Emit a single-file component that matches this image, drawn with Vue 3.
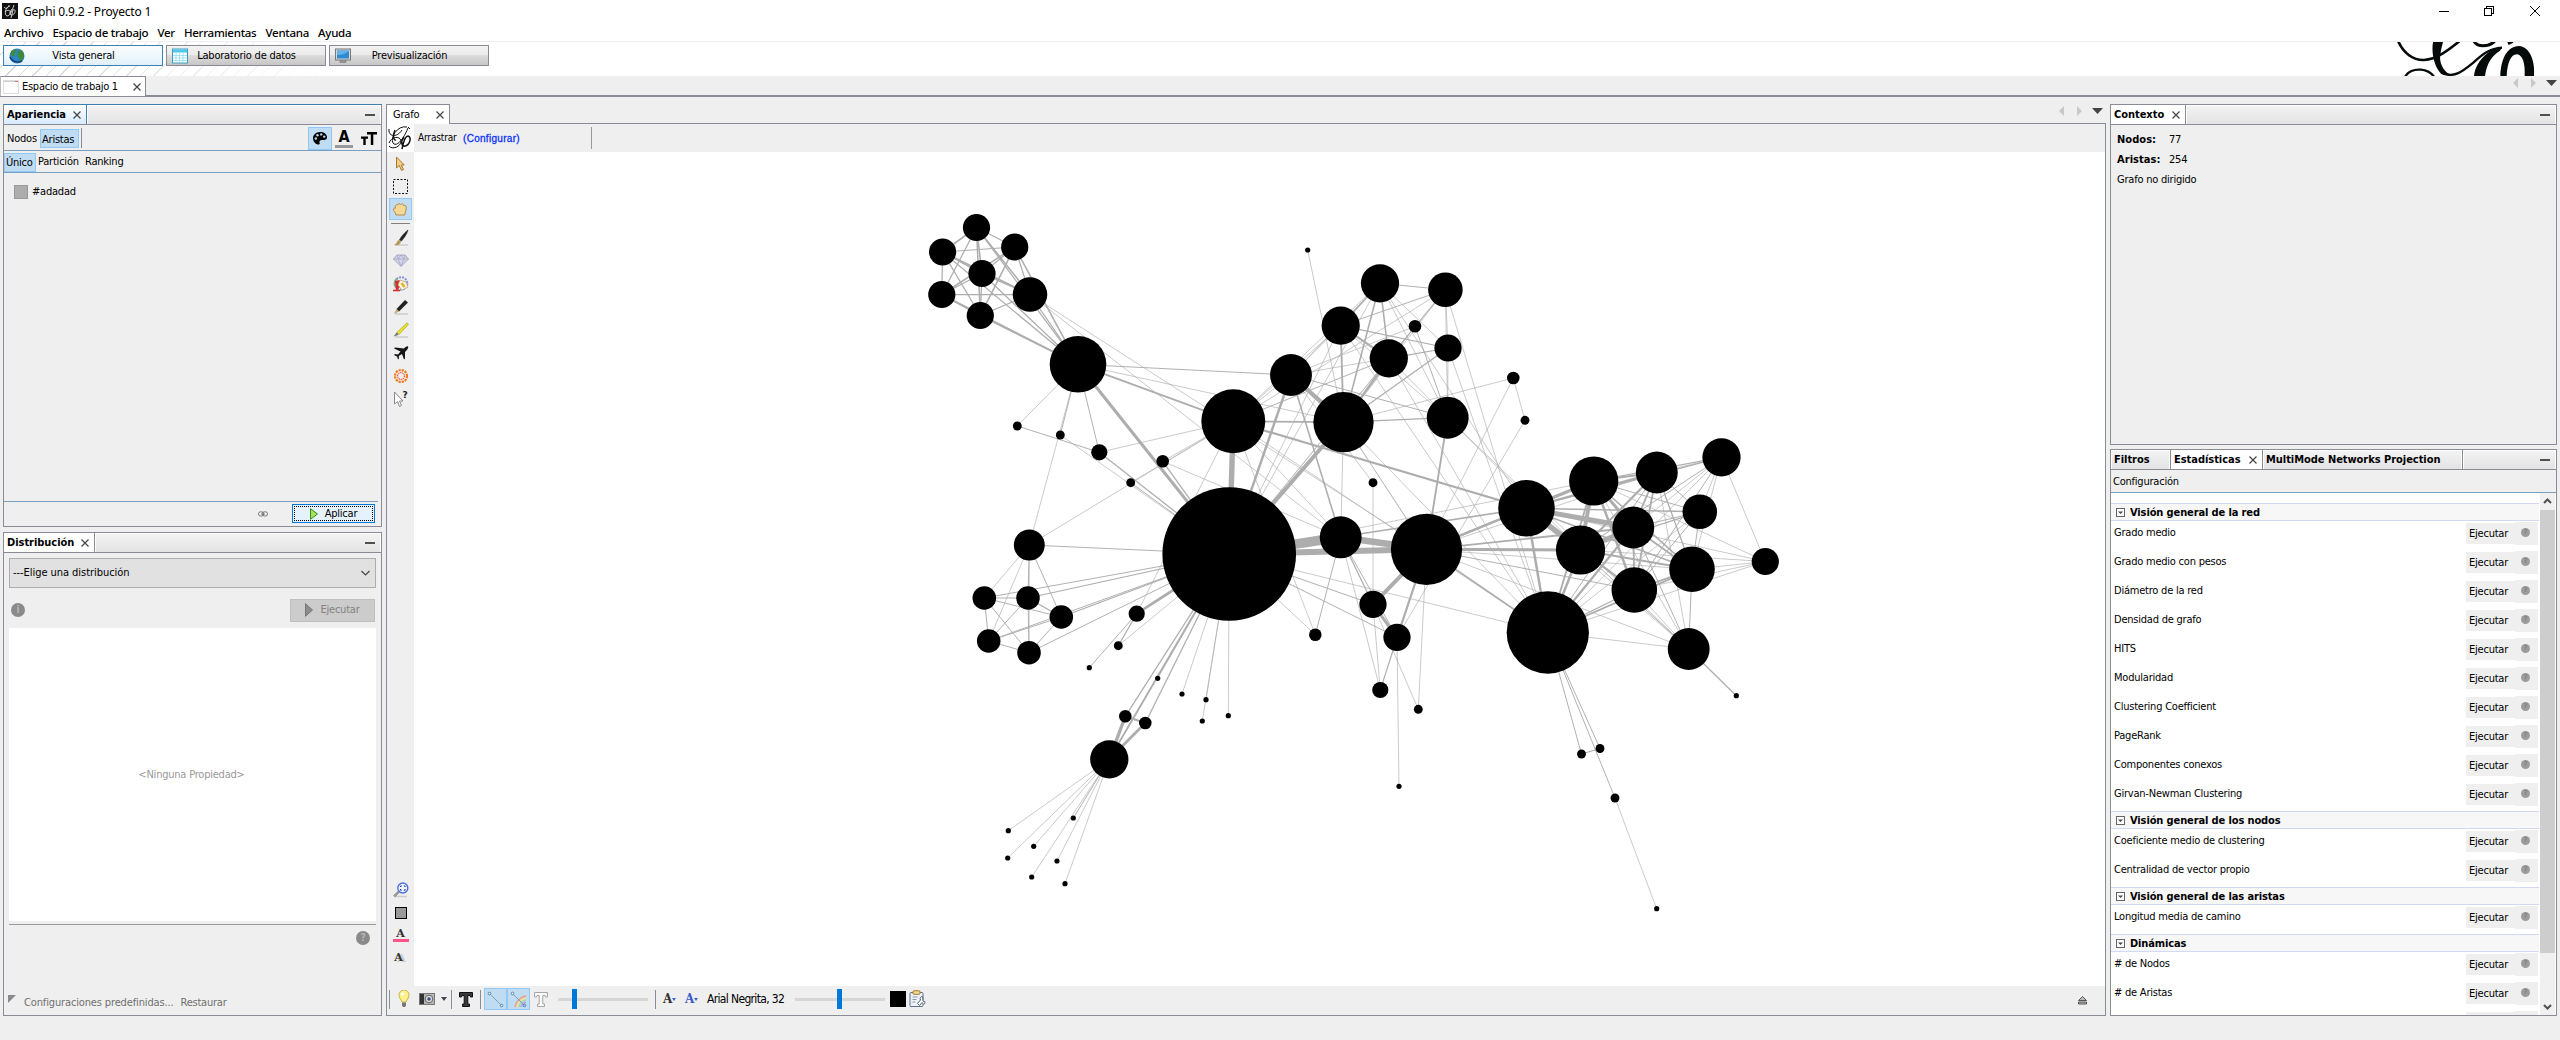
<script setup>
const menus = ['Archivo', 'Espacio de trabajo', 'Ver', 'Herramientas', 'Ventana', 'Ayuda']

const sections = [
  {
    title: 'Visión general de la red',
    rows: ['Grado medio', 'Grado medio con pesos', 'Diámetro de la red', 'Densidad de grafo', 'HITS', 'Modularidad',
      'Clustering Coefficient', 'PageRank', 'Componentes conexos', 'Girvan-Newman Clustering'],
  },
  { title: 'Visión general de los nodos', rows: ['Coeficiente medio de clustering', 'Centralidad de vector propio'] },
  { title: 'Visión general de las aristas', rows: ['Longitud media de camino'] },
  { title: 'Dinámicas', rows: ['# de Nodos', '# de Aristas', ''] },
]

// Node centres, indexed by node id
const points = [
  [1109.3, 759.3], [1008.3, 830.7], [1145.3, 723], [1125.3, 716.3], [1033.7, 846.3], [1007.7, 858], [1031.7, 877],
  [1057, 861], [1073.3, 818], [1065, 883.7], [1157.7, 678.3], [1229.2, 554], [1060.3, 435], [1182, 694],
  [1206, 699.7], [1202.3, 721], [1030, 294.5], [982, 273.5], [942.6, 252], [976.5, 227.5], [980.3, 315.5],
  [941.8, 294.5], [1014.7, 247], [1078, 364.3], [1291, 375], [1343.5, 422.2], [1340.7, 537.3], [1233.3, 421.3],
  [1136.7, 613.7], [1029.3, 545], [1017.3, 426], [1099.3, 452.3], [1228.3, 715.7], [1130.7, 482.7], [1028, 598],
  [1061.3, 617], [984.3, 598], [988.7, 641], [1029, 652.7], [1513.3, 378], [1307.7, 250], [1447.7, 417.7],
  [1415, 326.3], [1162.7, 461.3], [1118.3, 645.7], [1089.3, 667.7], [1656.7, 908.7], [1615, 798], [1547.8, 632.5],
  [1373, 604.3], [1373, 482.7], [1397, 637.3], [1525, 420.3], [1399, 786.3], [1380.3, 690], [1426.5, 549.3],
  [1418.3, 709.3], [1688.7, 649], [1526.5, 508.3], [1633.3, 527.5], [1699.8, 511.8], [1656.8, 472.5],
  [1580.5, 550], [1692, 569.3], [1593.7, 481], [1634.3, 590], [1721.5, 457.3], [1736.3, 695.7], [1340.7, 325.7],
  [1388.8, 358.3], [1380, 283.3], [1445.4, 289.7], [1315.3, 634.7], [1581.5, 754], [1600, 748.5], [1448, 348],
  [1765.3, 561.5],
]

// source: target/weight …
const adjacency = `
1:0/1;2:0/8;3:0/10 2/6;4:0/1;5:0/1;6:0/1;7:0/1;8:0/2;9:0/1;11:10/1 3/3 2/3 0/5;12:11/1;13:11/1;14:11/1;15:11/1;
17:16/4;18:16/4 17/4;19:16/4 17/4 18/4;20:16/3 17/3 18/3 19/4;21:16/3 17/3 18/3 19/3 20/5;
22:16/3 17/3 18/3 19/3 20/4 21/4;23:16/3 17/3 18/3 19/3 20/4 21/4 22/4 12/2 11/9;24:23/2 11/7;25:24/13 23/1 11/12;
26:24/4 11/31 16/1 25/1;27:11/17 23/5 25/5 24/1 26/1;28:11/8 27/1;29:23/1 27/1 11/2;30:23/1;31:30/2 11/3 23/2 27/1;
32:11/1;33:11/2 27/1;34:11/3 29/2;35:11/3 29/2 34/3;36:34/2 35/2 11/2 29/1;37:34/2 35/2 36/2 11/2 29/1;
38:34/2 35/2 36/2 37/2 11/2 29/1;39:25/1;40:25/1;41:24/2 25/3;42:41/2 25/2 24/1;43:11/3 26/1 27/1;44:28/3 11/1;
45:28/2;47:46/1;48:47/2 25/1 27/1 11/1;49:26/3 11/2;50:49/1 24/1;51:49/9 26/2 11/2;52:51/1 39/1;53:51/1;
54:51/2 49/1 26/1;55:51/6 49/12 39/1 54/1 26/21 11/19 16/1 25/2 41/5 48/4;56:49/1 55/1;57:55/1 41/1 48/1;
58:55/7 48/7 27/6 57/1 11/4;59:58/15 55/5 48/6 57/2;60:48/1 58/4 59/2;61:48/2 58/6 60/2 59/5 57/1 55/1;
62:55/9 58/17 59/13 48/7 57/2 41/1 61/6 60/3;63:59/5 48/5 62/6 57/2 58/4 61/3 60/2 55/1;
64:55/5 62/12 48/5 63/4 58/10 61/6 60/2 59/9 57/1 11/1;65:63/5 64/7 48/3 62/5 58/5 61/5 60/2 59/5 57/1 55/2;
66:64/3 58/3 59/1 62/2 65/2 48/1 63/1 61/1 60/1;67:57/3;68:25/5 11/1 24/1 27/1 48/1 41/1;
69:25/6 68/6 11/1 24/1 27/2 48/1 41/1;70:25/4 69/4 68/4 11/1 24/1 27/1 41/1 58/1;
71:27/1 69/2 68/2 70/2 11/1 48/1 41/1 25/1;72:26/2 27/1 11/1;73:48/2;74:48/2 73/3;75:69/3 68/3 25/3 48/1 41/1 70/1 71/1;
76:64/1 65/1 66/1 63/1 62/1 48/1 58/1`

const edges = adjacency.replace(/\n/g, '').split(';').flatMap((entry) => {
  const [source, list] = entry.split(':')
  return list.split(' ').map((item) => {
    const [target, weight] = item.split('/').map(Number)
    return { a: points[+source], b: points[target], s: +source, t: target, w: weight }
  })
})

const degree = points.map((_, i) => edges.filter((e) => e.s === i || e.t === i).length)
const nodes = points.map(([x, y], i) => ({ x, y, r: 2.6 + 1.835 * (degree[i] - 1) }))
const edgeWidth = (w) => (w === 1 ? 0.65 : 0.3 * w + 0.35)
</script>

<template>
  <div class="app">
    <header class="titlebar">
      <svg class="appicon" width="16" height="16" viewBox="0 0 16 16">
        <rect width="16" height="16" fill="#111" />
        <path d="M2 4c2 3 5 0 5-2M8 3c-5 1-6 9-3 10c3 0 5-5 7-11M3 9c3-3 6-2 5 2M10 6c-2 2-3 7 0 6c4-1 4-7 1-5l-2 8" fill="none" stroke="#ddd" stroke-width=".9" />
      </svg>
      <span class="title">Gephi 0.9.2 - Proyecto 1</span>
      <svg class="winctl" width="110" height="20" viewBox="0 0 110 20" fill="none" stroke="#000" shape-rendering="crispEdges">
        <path d="M9 10.500h10M54.500 7.500h7v7h-7zM56.500 7.500v-2h7v7h-2" />
        <path d="M100 5l10 10M110 5l-10 10" shape-rendering="auto" />
      </svg>
    </header>
    <nav class="menubar"><span v-for="m in menus" :key="m">{{ m }}</span></nav>

    <div class="banner">
      <button class="mode on">
        <svg width="16" height="16" viewBox="0 0 16 16"><circle cx="8" cy="8" r="7.500" fill="#2f84c4" /><path d="M2 3.500C4 1 7 1 8 2l-1 2-2 1 1 2-2 2-2-2zM9 3l4-.5 2 3v3l-2 4-2 1-1-4-2-2 1-3z" fill="#3d8a3a" /><path d="M1 9c2 5 8 6 12 4" stroke="#123f7c" stroke-width="1.500" fill="none" /></svg>
        <span>Vista general</span>
      </button>
      <button class="mode">
        <svg width="16" height="16" viewBox="0 0 16 16"><rect x=".5" y="1" width="15" height="14" fill="#fff" stroke="#3d9cc0" /><rect x="1" y="1.500" width="14" height="3" fill="#4cc8ea" /><path d="M4 5v10M7.500 5v10M11 5v10M1 7.500h14M1 10h14M1 12.500h14" stroke="#8edaf0" stroke-width=".8" /></svg>
        <span>Laboratorio de datos</span>
      </button>
      <button class="mode">
        <svg width="16" height="16" viewBox="0 0 16 16"><rect x=".5" y="1" width="15" height="11" fill="#d8d8d8" stroke="#777" /><rect x="2" y="2.500" width="12" height="8" fill="#2e8ad0" /><path d="M2 7c4 0 8-1 12-4v-.5H2z" fill="#64b2e8" /><path d="M5 12.500h6v2H5z" fill="#999" stroke="#777" stroke-width=".6" /></svg>
        <span>Previsualización</span>
      </button>
      <svg class="logo" width="142" height="34" viewBox="1065 126 426 102" fill="none" stroke="#050a0b">
        <path d="M1074 122C1090 160 1120 181 1152 180C1190 178 1226 150 1258 124" stroke-width="8" />
        <path d="M1180 122C1173 150 1180 198 1204 222L1240 228C1215 222 1196 190 1201 166C1202 150 1206 140 1210 122Z" fill="#050a0b" stroke="none" />
        <path d="M1095 232C1102 214 1124 207 1142 209C1162 211 1175 220 1182 230" stroke-width="7" />
        <path d="M1204 218C1240 236 1266 216 1300 188C1330 160 1350 146 1386 143" stroke-width="7" />
        <path d="M1302 228C1304 205 1318 178 1343 159C1356 149 1370 146 1386 142L1380 152C1356 166 1340 190 1335 228Z" fill="#050a0b" stroke="none" />
        <path d="M1381 228C1383 178 1400 139 1437 138C1470 140 1486 184 1482 228H1454C1456 190 1448 165 1431 163C1412 163 1402 190 1400 228Z" fill="#050a0b" stroke="none" />
        <path d="M1302 124C1312 142 1344 142 1364 124M1404 131L1418 124" stroke-width="9" />
      </svg>
    </div>

    <div class="workspaces">
      <div class="wstab">
        <svg width="16" height="14" viewBox="0 0 16 14"><rect x=".5" y=".5" width="15" height="13" fill="#fdfdfd" stroke="#ddd" /><path d="M1 1.500h14" stroke="#ccc" /><path d="M12 1.500h3" stroke="#d66" /></svg>
        <span>Espacio de trabajo 1</span>
        <svg class="x" width="8" height="8" viewBox="0 0 8 8"><path d="M.5.5l7 7M7.500.5l-7 7" /></svg>
      </div>
      <svg class="arrows" width="44" height="10" viewBox="0 0 44 10"><path d="M5 0v10L0 5zM18 0v10l5-5z" fill="#c8c8c8" /><path d="M33 2h11l-5.500 6z" fill="#444" /></svg>
    </div>

    <main class="main">
      <aside class="left">
        <section class="panel appearance">
          <div class="tabs"><div class="tab active-blue" style="width: 83px"><b>Apariencia</b><svg class="x" width="8" height="8" viewBox="0 0 8 8"><path d="M.5.5l7 7M7.500.5l-7 7" /></svg></div><div class="fill"><i class="min"></i></div></div>
          <div class="row1">
            <span class="nodos">Nodos</span><span class="sel aristas">Aristas</span><i class="vsep"></i>
            <div class="tools">
              <span class="sel pal"><svg width="14" height="13" viewBox="0 0 14 13"><path d="M7 0C3 0 0 3 0 6c0 3 2 6 5 6.500 2 .4 2-1 1.500-2S7 8 8.500 8H11c2 0 3-1 3-2.500C14 2 11 0 7 0z" fill="#000" /><g fill="#c0dcf3"><circle cx="2.800" cy="6.500" r="1.200" /><circle cx="4.500" cy="3.200" r="1.200" /><circle cx="8.200" cy="2.400" r="1.200" /><circle cx="11.200" cy="4.600" r="1.200" /></g></svg></span>
              <span class="bigA">A</span>
              <svg width="16" height="13" viewBox="0 0 16 13"><path d="M6 0h10v2.500h-3.700V13H9.800V2.500H6zM0 4.500h7v2.200H4.700V13H2.300V6.700H0z" fill="#000" /></svg>
            </div>
          </div>
          <div class="row2"><span class="sel unico">Único</span><span class="partic">Partición</span><span class="rank">Ranking</span></div>
          <div class="color"><i></i><span>#adadad</span></div>
          <div class="apply">
            <svg width="10" height="6" viewBox="0 0 10 6" fill="none" stroke="#777"><rect x=".5" y=".8" width="5" height="4.200" rx="2" /><rect x="4.500" y=".8" width="5" height="4.200" rx="2" /><path d="M3 3h4" /></svg>
            <button class="applybtn"><span><svg width="8" height="12" viewBox="0 0 8 12"><path d="M.5.7v10.600L7.500 6z" fill="#a9e05c" stroke="#2f8f1f" /></svg>Aplicar</span></button>
          </div>
        </section>

        <section class="panel layout">
          <div class="tabs"><div class="tab" style="width: 91px"><b>Distribución</b><svg class="x" width="8" height="8" viewBox="0 0 8 8"><path d="M.5.5l7 7M7.500.5l-7 7" /></svg></div><div class="fill"><i class="min"></i></div></div>
          <div class="combo"><span>---Elige una distribución</span><svg width="9" height="6" viewBox="0 0 9 6"><path d="M.5 1l4 4 4-4" fill="none" stroke="#444" stroke-width="1.200" /></svg></div>
          <div class="runrow"><i class="dot">i</i><button class="runbtn"><svg width="8" height="14" viewBox="0 0 8 14"><path d="M.5.7v12.600L7.500 7z" fill="#8d8d8d" stroke="#777" /></svg>Ejecutar</button></div>
          <div class="props">&lt;Ninguna Propiedad&gt;</div>
          <div class="helprow"><i class="dot">?</i></div>
          <div class="presets"><svg width="8" height="8" viewBox="0 0 8 8"><path d="M0 0h8L0 8z" fill="#8a8a8a" /></svg><span class="cp">Configuraciones predefinidas...</span><span>Restaurar</span></div>
        </section>
      </aside>

      <section class="center">
        <div class="gtabs">
          <div class="gtab"><span>Grafo</span><svg class="x" width="8" height="8" viewBox="0 0 8 8"><path d="M.5.5l7 7M7.500.5l-7 7" /></svg></div>
          <svg class="garrows" width="44" height="10" viewBox="0 0 44 10"><path d="M5 0v10L0 5zM18 0v10l5-5z" fill="#c8c8c8" /><path d="M33 2h11l-5.500 6z" fill="#444" /></svg>
        </div>
        <div class="gbody">
          <div class="gtop">
            <svg class="glogo" width="27" height="28" viewBox="0 0 27 28" fill="none" stroke="#111">
              <path d="M2 5c-1 8 8 9 13 1M20 3C10 1 3 14 6 19c4 5 11-5 15-15M21 3l2 2M2 19c2-6 11-8 12-2c0 6-9 9-12 5" stroke-width="1" />
              <path d="M17 13c-4 5-2 10 1 9c5-1 7-9 3-10c-3 0-5 8-6 13" stroke-width="1.500" /><path d="M8 6C5 12 7 17 9 16" stroke-width="1.400" />
            </svg>
            <span class="drag">Arrastrar</span><span class="conf">(Configurar)</span><i class="gsep"></i>
          </div>
          <div class="gmid">
            <div class="gtools">
              <div class="tg">
                <span class="ti"><svg width="16" height="18" viewBox="0 0 16 18"><path d="M4.500 2v11l2.800-2.500 2.200 5 2-1-2.200-4.500h3z" fill="#f0cf86" stroke="#a9772f" /></svg></span>
                <span class="ti"><svg width="15" height="15" viewBox="0 0 15 15"><rect x=".5" y=".5" width="14" height="14" fill="none" stroke="#111" stroke-dasharray="2 1.500" /></svg></span>
                <span class="ti sel"><svg width="14" height="13" viewBox="0 0 14 13"><path d="M3 12c0-3-3-4-2.500-6 .5-1 1-1 2-.8C2 2 3 1.500 4.500 2 5 .5 7 .3 7.500 1.500 9 .3 10.500 1 10.500 2.500c2-.5 3 .5 2.800 2.500-.3 3-1.300 4-1.500 7z" fill="#f4d894" stroke="#a9772f" stroke-width=".8" /></svg></span>
              </div>
              <i class="hsep"></i>
              <span class="ti"><svg width="16" height="18" viewBox="0 0 16 18"><path d="M2 16h13" stroke="#ccc" stroke-width="1.500" /><path d="M15 1C11 4 8 8 6.500 11l2 1C11 9 14 5 15 1z" fill="#222" stroke="#222" stroke-width=".6" /><path d="M6 11c-2 0-2 4-5 5 4 1 7-1 7-4z" fill="#b59a55" /></svg></span>
              <span class="ti"><svg width="16" height="14" viewBox="0 0 16 14"><path d="M4 1h8l3.500 4L8 12.500.5 5z" fill="#d4d4ea" stroke="#9797b8" stroke-width=".8" /><path d="M.5 5h15M5 5l3 7 3-7M4 1l1 4 3-4 3 4 1-4" fill="none" stroke="#a3a3c0" stroke-width=".7" /></svg></span>
              <span class="ti"><svg width="16" height="16" viewBox="0 0 16 16"><circle cx="8" cy="7.500" r="6.300" fill="none" stroke="#8a8fe0" stroke-width="2" stroke-dasharray="2 1" /><path d="M2 10a6.500 6.500 0 0 1 3-8" stroke="#6ac070" stroke-width="2" stroke-dasharray="2 1" fill="none" /><path d="M2 5l5-1 1 6-5 5z" fill="#d4302a" /><path d="M7 4l6 2 2 5-6 3-4-5z" fill="#fbf6ea" stroke="#b99a60" stroke-width=".7" /><path d="M8.500 7l3 4" stroke="#e8b020" stroke-width="2.500" /><path d="M0 14.500h7" stroke="#d4302a" stroke-width="1.600" /></svg></span>
              <span class="ti"><svg width="16" height="16" viewBox="0 0 16 16"><path d="M2 15h13" stroke="#ccc" stroke-width="1.500" /><path d="M12 1l3 2.500L6 12.500 3.500 10z" fill="#222" /><path d="M3.500 10L1 15l5-2.500z" fill="#caa56c" /></svg></span>
              <span class="ti"><svg width="16" height="16" viewBox="0 0 16 16"><path d="M2 15h13" stroke="#ccc" stroke-width="1.500" /><path d="M14 .8l1.500 1.500L6 12.500 4 10.500z" fill="#ece52a" stroke="#a8a214" stroke-width=".7" /><path d="M4 10L.5 14.500l5-1.500z" fill="#777" /></svg></span>
              <span class="ti"><svg width="16" height="14" viewBox="0 0 16 14"><path d="M15 .5c-1-.6-2.500.5-4 2L2 1.500l-1 1L7.500 5.500 5 8.500 2 8 1 9l3 1.500L5 13.500l1-1-.2-2.500L9 8l2 5.500 1-1V6c2-2 4-4 3-5.500z" fill="#151515" /></svg></span>
              <span class="ti"><svg width="16" height="16" viewBox="0 0 16 16" fill="none"><circle cx="8" cy="8" r="6" stroke="#f47a20" stroke-width="2.200" stroke-dasharray="2.200 .94" /><circle cx="8" cy="8" r="3.400" stroke="#f05a3a" stroke-width="1.200" stroke-dasharray="1.400 .7" /></svg></span>
              <span class="ti"><svg width="16" height="18" viewBox="0 0 16 18"><path d="M1.500 2v12l3-2.500 2 5 2-1-2-4.500h3.500z" fill="#fff" stroke="#888" /><text x="9.500" y="8" font-size="9" font-weight="bold" font-family="DejaVu Sans" fill="#222">?</text></svg></span>
              <span class="grow"></span>
              <span class="ti b"><svg width="16" height="16" viewBox="0 0 16 16"><path d="M2 14.500h12" stroke="#ccc" stroke-width="1.500" /><path d="M1 14.500L6 9.500" stroke="#999" stroke-width="2.500" /><circle cx="9.800" cy="6" r="5" fill="#eef3ff" stroke="#4a6fd8" stroke-width="1.400" /><path d="M7.500 5V4h1.300M10.800 4h1.300v1M12.100 7v1.200h-1.300M8.800 8.200H7.500V7" fill="none" stroke="#2a3fa8" /></svg></span>
              <span class="ti b"><i class="gray"></i></span>
              <span class="ti b lab"><em>A</em></span>
              <span class="ti b lab2"><em>A</em></span>
            </div>
            <svg class="graph" width="1691" height="834" viewBox="414 152 1691 834">
              <g stroke="#adadad"><line v-for="(e, i) in edges" :key="i" :x1="e.a[0]" :y1="e.a[1]" :x2="e.b[0]" :y2="e.b[1]" :stroke-width="edgeWidth(e.w)" /></g>
              <circle v-for="(n, i) in nodes" :key="i" :cx="n.x" :cy="n.y" :r="n.r" />
            </svg>
          </div>
          <div class="gbar">
            <i class="s" style="margin-left: 2px"></i>
            <svg style="margin-left: 8px" width="12" height="18" viewBox="0 0 12 18"><path d="M4 12C3 9 1 8 1 5a5 5 0 0 1 10 0c0 3-2 4-3 7z" fill="#fbf28a" stroke="#c9b24a" /><path d="M4 12.500h4v3l-1 1.500H5l-1-1.500z" fill="#777" /><circle cx="4.500" cy="4" r="1.500" fill="#fff" /></svg>
            <svg style="margin-left: 9px" width="16" height="14" viewBox="0 0 16 14"><rect x=".5" y="1.500" width="15" height="11" fill="#b5b5b5" stroke="#777" /><rect x="1" y="2" width="4" height="10" fill="#333" /><circle cx="10" cy="7" r="3.800" fill="#ddd" stroke="#666" /><circle cx="10" cy="7" r="1.800" fill="#405080" /></svg>
            <svg style="margin-left: 6px" width="6" height="4" viewBox="0 0 6 4"><path d="M0 0h6L3 4z" fill="#445" /></svg>
            <i class="s" style="margin-left: 4px"></i>
            <svg style="margin-left: 7px" width="14" height="15" viewBox="0 0 14 15"><path d="M.5.5h13v4.500h-2L11 3.500H8.800v8.500h1.700v2.500h-7V12h1.700V3.500H3L2.500 5h-2z" fill="#38383c" stroke="#111" /></svg>
            <i class="s" style="margin-left: 7px"></i>
            <span class="sel tog" style="margin-left: 3px"><svg width="17" height="17" viewBox="0 0 17 17"><path d="M2.500 2.500l12 12" stroke="#7a9fc0" /><circle cx="2.500" cy="2.500" r="1.300" fill="#fff" stroke="#5580a8" /><circle cx="14.500" cy="14.500" r="1.300" fill="#fff" stroke="#5580a8" /></svg></span>
            <span class="sel tog"><svg width="17" height="17" viewBox="0 0 17 17" fill="none"><path d="M5 16C6 11 10 6 16 5" stroke="#e8a09a" stroke-width="1.800" /><path d="M7 16c1-5 4-8 9-9" stroke="#eedf9a" stroke-width="1.800" /><path d="M9 16c1-4 3-6 7-7" stroke="#a6d8b0" stroke-width="1.800" /><path d="M11 16c1-3 2-4 5-5" stroke="#b0a8e4" stroke-width="1.800" /><path d="M2.500 2.500l12 12" stroke="#7a9fc0" /><circle cx="2.500" cy="2.500" r="1.300" fill="#fff" stroke="#5580a8" /><circle cx="14.500" cy="14.500" r="1.300" stroke="#5580a8" /></svg></span>
            <svg style="margin-left: 4px" width="14" height="15" viewBox="0 0 14 15"><path d="M.5.5h13v4.500h-2L11 3.500H8.800v8.500h1.700v2.500h-7V12h1.700V3.500H3L2.500 5h-2z" fill="#fafafa" stroke="#a5a5a5" /></svg>
            <div class="slider" style="margin-left: 10px"><i style="margin-left: 14px"></i></div>
            <i class="s" style="margin-left: 7px"></i>
            <span class="serif" style="margin-left: 7px">A<small></small></span>
            <span class="serif blue" style="margin-left: 8px">A<small></small></span>
            <span class="fontname">Arial Negrita, 32</span>
            <div class="slider" style="margin-left: 10px"><i style="margin-left: 42px"></i></div>
            <i class="black"></i>
            <svg style="margin-left: 3px" width="17" height="18" viewBox="0 0 17 18"><rect x="1" y="2.500" width="13" height="14" rx="1" fill="#eef1f6" stroke="#5f6f88" /><rect x="4" y=".8" width="7" height="3.500" rx="1" fill="#f0d8a0" stroke="#a87820" /><path d="M3.500 7h5M3.500 9.500h4M3.500 12h3" stroke="#8a9ab0" /><path d="M13.500 6.500c-2 0-3 1.500-2 3.500l-3 3.500 2 2 2.500-3c2 3 3 1.500 3-1-1 1-3-1-2-2.500z" fill="#fff" stroke="#4f5f78" /></svg>
            <svg class="eject" width="9" height="9" viewBox="0 0 9 9"><path d="M4.500.5l4 4h-8zM.5 6h8v2h-8z" fill="#bbb" stroke="#333" stroke-width=".8" /></svg>
          </div>
        </div>
      </section>

      <aside class="right">
        <section class="panel context">
          <div class="tabs"><div class="tab" style="width: 75px"><b>Contexto</b><svg class="x" width="8" height="8" viewBox="0 0 8 8"><path d="M.5.5l7 7M7.500.5l-7 7" /></svg></div><div class="fill"><i class="min"></i></div></div>
          <div class="facts">
            <p><b>Nodos:</b>77</p>
            <p><b>Aristas:</b>254</p>
            <p>Grafo no dirigido</p>
          </div>
        </section>
        <section class="panel stats">
          <div class="tabs">
            <div class="tab off" style="width: 60px"><b>Filtros</b></div>
            <div class="tab" style="width: 92px"><b>Estadísticas</b><svg class="x" width="8" height="8" viewBox="0 0 8 8"><path d="M.5.5l7 7M7.500.5l-7 7" /></svg></div>
            <div class="tab off" style="width: 200px"><b>MultiMode Networks Projection</b></div>
            <div class="fill"><i class="min"></i></div>
          </div>
          <div class="config">Configuración</div>
          <div class="listwrap">
            <div class="list">
              <template v-for="s in sections" :key="s.title">
                <h3><svg width="9" height="9" viewBox="0 0 9 9"><rect x=".5" y=".5" width="8" height="8" fill="#fff" stroke="#666" /><path d="M2 3.500h5L4.500 6z" fill="#444" /></svg>{{ s.title }}</h3>
                <div v-for="r in s.rows" :key="r" class="stat"><span>{{ r }}</span><button>{{ r ? 'Ejecutar' : '' }}</button><i class="q"><em v-if="r">?</em></i></div>
              </template>
            </div>
            <div class="scroll">
              <svg width="9" height="6" viewBox="0 0 9 6"><path d="M1 5l3.500-3.500L8 5" fill="none" stroke="#505050" stroke-width="2" /></svg>
              <i></i>
              <svg width="9" height="6" viewBox="0 0 9 6"><path d="M1 1l3.500 3.500L8 1" fill="none" stroke="#505050" stroke-width="2" /></svg>
            </div>
          </div>
        </section>
      </aside>
    </main>
  </div>
</template>

<style>
html, body { margin: 0; overflow: hidden; }
</style>

<style scoped>
* { box-sizing: border-box; }
i, em { font-style: normal; display: block; }
svg { display: block; flex: none; }
button { font: inherit; letter-spacing: inherit; color: inherit; padding: 0; margin: 0; border: 0; border-radius: 0; }
.app { width: 2560px; height: 1040px; background: #efefef; display: flex; flex-direction: column; font: 11px/14px "DejaVu Sans Condensed", "DejaVu Sans", sans-serif; letter-spacing: -0.22px; color: #000; white-space: nowrap; overflow: hidden; }
b { font-weight: bold; letter-spacing: -0.04px; }
.x path { stroke: #444; stroke-width: 1.2; fill: none; }
.sel { background: #c0dcf3; border: 1px solid #90c8f6; }

.titlebar { height: 24px; background: #fff; display: flex; align-items: center; padding: 0 20px 2px 2px; flex: none; }
.title { margin-left: 5px; font: 12px/16px "Noto Sans", sans-serif; letter-spacing: -0.2px; padding-top: 2px; }
.winctl { margin-left: auto; }
.menubar { height: 18px; background: #fff; border-bottom: 1px solid #efefef; display: flex; padding: 2px 0 0 4px; gap: 9px; font: 500 11.5px/14px "Noto Sans", sans-serif; letter-spacing: -0.26px; flex: none; }

.banner { height: 34px; flex: none; background: linear-gradient(90deg, rgba(255,255,255,0), #fff 340px), repeating-linear-gradient(135deg, #fff 0 8.500px, #d4d4d4 8.500px 9.500px); display: flex; padding: 3px 23px 0 3px; gap: 3px; }
.mode { width: 160px; height: 21px; border: 1px solid #898c95; background: linear-gradient(#f2f2f2, #ebebeb 45%, #dcdcdc 50%, #c6c6c6); display: flex; align-items: center; padding-left: 5px; }
.mode span { flex: 1; text-align: center; padding-right: 20px; }
.mode.on { border-color: #3c7fb1; background: linear-gradient(#fafdff, #eff8fd 50%, #dff0fb); }
.logo { margin: -3px 0 0 auto; }

.workspaces { height: 21px; flex: none; border-bottom: 2px solid #898c95; display: flex; align-items: flex-start; }
.wstab { width: 146px; height: 20px; background: #fff; border: 1px solid #898c95; border-left-color: #bbb; border-bottom: 0; display: flex; align-items: center; padding-left: 2px; }
.wstab span { margin-left: 3px; width: 98px; letter-spacing: -0.27px; }
.wstab .x { margin-left: 13px; }
.arrows { margin: 2px 3px 0 auto; }

.main { flex: none; height: 943px; display: flex; padding: 7px 3px 24px 3px; }
.left { width: 379px; display: flex; flex-direction: column; gap: 5px; margin-right: 4px; }
.panel { border: 1px solid #898c95; display: flex; flex-direction: column; }
.tabs { height: 20px; flex: none; border-bottom: 1px solid #898c95; display: flex; background: linear-gradient(#f4f4f4, #e3e3e3); }
.tab { background: #fff; border-right: 1px solid #898c95; display: flex; align-items: center; padding: 1px 5px 0 3px; justify-content: space-between; flex: none; }
.tab.off { background: linear-gradient(#f4f4f4, #e3e3e3); box-shadow: inset 1px 1px #fff, inset -1px 0 #fff; }
.tab.active-blue { background: linear-gradient(#fff, #d6eaff); border-color: #3c7fb1; }
.fill { flex: 1; display: flex; align-items: center; justify-content: flex-end; padding-right: 6px; box-shadow: inset 1px 1px #fff, inset -1px 0 #fff; }
.min { width: 10px; height: 2px; background: #505050; }

.appearance { height: 423px; border-top-color: #3c7fb1; }
.row1 { height: 26px; flex: none; border-bottom: 1px solid #7a9fc0; display: flex; align-items: center; padding: 1px 0 0 3px; }
.nodos { width: 33px; padding-top: 1px; }
.aristas { width: 39px; height: 19px; padding: 1px 0 0 1px; line-height: 17px; }
.vsep { width: 1px; height: 20px; background: #898c95; margin-left: 2px; }
.tools { margin-left: auto; display: flex; align-items: center; padding-right: 4px; }
.pal { width: 24px; height: 23px; display: flex; align-items: center; justify-content: center; }
.bigA { width: 18px; height: 18px; border-bottom: 3px solid #999; margin: 2px 8px 0 3px; text-align: center; font: bold 16px/14px "DejaVu Sans Condensed", "DejaVu Sans", sans-serif; }
.row2 { height: 22px; flex: none; border-bottom: 1px solid #7a9fc0; display: flex; align-items: center; padding-top: 1px; }
.unico { width: 32px; height: 19px; line-height: 18px; padding-left: 1px; }
.partic { margin-left: 2px; width: 47px; }
.color { display: flex; padding: 12px 0 0 10px; flex: 1; align-items: flex-start; }
.color i { width: 14px; height: 14px; background: #adadad; border: 1px solid #999; margin-right: 4px; }
.apply { height: 25px; flex: none; border-top: 1px solid #7a9fc0; margin-right: 3px; display: flex; align-items: center; justify-content: flex-end; padding: 0 3px 1px 0; }
.applybtn { width: 83px; height: 19px; margin-left: 24px; border: 1px solid #0078d7; background: #e5f1fb; padding: 1px; }
.applybtn span { height: 15px; border: 1px dotted #000; display: flex; align-items: center; justify-content: center; gap: 7px; }

.layout { height: 484px; flex: none; }
.appearance { height: 423px; }
.combo { height: 30px; flex: none; margin: 5px 5px 0; border: 1px solid #adadad; background: #e1e1e1; display: flex; align-items: center; justify-content: space-between; padding: 0 5px 0 3px; font-variant-ligatures: none; letter-spacing: -0.05px; }
.runrow { height: 40px; flex: none; display: flex; align-items: center; justify-content: space-between; padding: 4px 6px 0 7px; }
.dot { width: 14px; height: 14px; border-radius: 50%; background: #8a8a8a; color: #b5b5b5; font-weight: bold; text-align: center; font-size: 10px; letter-spacing: 0; }
.runbtn { width: 85px; height: 23px; border: 1px solid #bfbfbf; background: #ccc; color: #838383; display: flex; align-items: center; justify-content: center; gap: 7px; }
.props { height: 293px; flex: none; background: #fff; margin: 0 5px; display: flex; align-items: center; justify-content: center; color: #999; padding-right: 2px; }
.helprow { margin: 3px 5px 0; border-top: 1px solid #999; height: 71px; flex: none; display: flex; justify-content: flex-end; padding: 6px 6px 0 0; }
.presets { display: flex; color: #707070; padding-left: 4px; }
.cp { margin: 1px 7px 0 8px; letter-spacing: -0.14px; }
.presets span:last-child { margin-top: 1px; }

.center { width: 1720px; margin-right: 4px; display: flex; flex-direction: column; }
.gtabs { height: 20px; flex: none; display: flex; align-items: flex-start; justify-content: space-between; box-shadow: inset 0 -1px #898c95; }
.gtab { width: 64px; height: 20px; background: #fff; border: 1px solid #898c95; border-bottom: 0; display: flex; align-items: center; justify-content: space-between; padding: 0 5px 0 6px; }
.garrows { margin: 2px 3px 0 0; }
.gbody { flex: 1; border: 1px solid #898c95; border-top: 0; display: flex; flex-direction: column; }
.gtop { height: 28px; flex: none; display: flex; align-items: center; }
.glogo { background: #fff; }
.drag { margin-left: 4px; width: 45px; font: 10px/14px "DejaVu Sans Condensed", "DejaVu Sans", sans-serif; letter-spacing: -0.15px; }
.conf { font: 10px/14px "Liberation Sans", sans-serif; letter-spacing: 0.3px; color: #0a32ff; width: 128px; padding-top: 1px; -webkit-text-stroke: 0.3px #0a32ff; }
.gsep { width: 1px; height: 22px; background: #999; }
.gmid { height: 834px; flex: none; display: flex; }
.graph { background: #fff; }
.gtools { width: 27px; display: flex; flex-direction: column; align-items: center; }
.tg { margin-right: 1px; }
.ti { width: 23px; height: 23px; display: flex; align-items: center; justify-content: center; flex: none; }
.ti.sel { height: 22px; }
.hsep { width: 19px; height: 1px; background: #808080; margin: 3px 0 2px; }
.grow { flex: 1; }
.gray { width: 12px; height: 12px; border: 1px solid #000; background: #999; }
.lab em { width: 16px; height: 13px; border-bottom: 3px solid #ff5588; font: bold 11px/10px "DejaVu Serif", serif; color: #333; text-align: center; }
.lab2 { padding-bottom: 1px; }
.lab2 em { font: bold 11px/12px "DejaVu Serif", serif; color: #333; text-shadow: 3px 1px #ccc; margin-right: 4px; }
.gtools > .lab2 { margin-bottom: 16px; }
.gbar { flex: 1; display: flex; align-items: center; padding-bottom: 3px; }
.s { width: 1px; height: 19px; background: #898c95; flex: none; }
.tog { width: 23px; height: 22px; display: flex; align-items: center; justify-content: center; }
.slider { width: 90px; height: 20px; flex: none; background: linear-gradient(#d6d6d6, #d6d6d6) 0 9px / 90px 3px no-repeat; }
.slider i { width: 5px; height: 20px; background: #0078d7; }
.serif { width: 14px; font: bold 12px/14px "DejaVu Serif", serif; color: #333; letter-spacing: 0; display: flex; align-items: center; }
.serif small { border: 2px solid transparent; border-top: 3px solid #4060d0; border-bottom: 0; }
.serif.blue { color: #4058c8; }
.fontname { margin-left: 8px; width: 78px; font: 12px/14px "DejaVu Sans Condensed", "DejaVu Sans", sans-serif; letter-spacing: -0.65px; }
.black { width: 16px; height: 16px; background: #000; margin-left: 5px; }
.eject { margin: 2px 18px 0 auto; }

.right { width: 447px; display: flex; flex-direction: column; gap: 4px; }
.context { height: 341px; flex: none; }
.facts { padding: 8px 0 0 6px; }
.facts p { margin: 0; height: 20px; line-height: 14px; }
.facts b { display: inline-block; width: 52px; letter-spacing: 0.05px; }
.stats { flex: 1; min-height: 0; }
.config { height: 23px; flex: none; line-height: 23px; padding-left: 2px; border-bottom: 1px solid #7a9fc0; }
.listwrap { flex: 1; min-height: 0; display: flex; background: #fff; }
.list { width: 428px; padding-top: 10px; overflow: hidden; margin-right: 1px; }
h3 { margin: 0; height: 18px; border: 1px solid #d0daf5; border-width: 1px 0; background: #f7f7f7; font: bold 11px/16px "DejaVu Sans Condensed", "DejaVu Sans", sans-serif; letter-spacing: -0.12px; display: flex; align-items: center; gap: 5px; padding: 1px 0 0 5px; }
.stat { height: 29px; display: flex; align-items: flex-start; padding: 1px 1px 0 3px; }
.stat span { flex: 1; padding-top: 4px; }
.stat button { width: 49px; height: 21px; margin-top: 1px; background: #efefef; text-align: left; padding-left: 3px; }
.q { width: 23px; height: 23px; background: #efefef; display: flex; padding: 6px; }
.q em { width: 9px; height: 9px; border-radius: 50%; background: #9c9c9c; color: #858585; font: bold 7px/9px "DejaVu Sans", sans-serif; text-align: center; letter-spacing: 0; }
.scroll { width: 15px; background: #f0f0f0; display: flex; flex-direction: column; align-items: center; padding-top: 5px; }
.scroll i { width: 15px; height: 443px; background: #cdcdcd; margin: 6px 0 51px; flex: none; }
</style>
